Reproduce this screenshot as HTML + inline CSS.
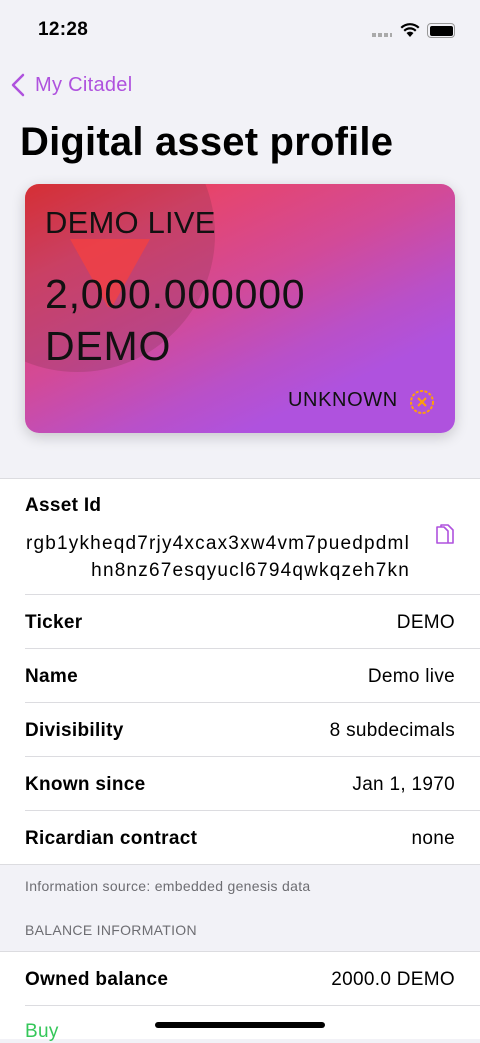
<!DOCTYPE html>
<html><head><meta charset="utf-8"><style>
*{margin:0;padding:0;box-sizing:border-box}
body{width:480px;height:1039px;overflow:hidden;background:#f2f2f7;font-family:"Liberation Sans",sans-serif;color:#000;position:relative;letter-spacing:0.3px}
.a{position:absolute}
.row{position:absolute;left:0;width:480px;height:54px;font-size:19px}
.row .l{position:absolute;left:25px;top:17px;font-weight:bold;font-size:19px}
.row .r{position:absolute;right:25px;top:17px}
.sep{position:absolute;left:25px;right:0;height:1px;background:#dcdce0}
</style></head><body>
<div class="a" style="left:38px;top:19px;font-size:19px;font-weight:bold">12:28</div>
<div class="a" style="left:372px;top:33px;width:20px;height:4px;background:repeating-linear-gradient(90deg,#aaa 0 4px,transparent 4px 6px)"></div>
<svg class="a" style="left:400px;top:22px" width="20" height="16" viewBox="0 0 20 16"><path d="M10 15 L6.5 11 A5 5 0 0 1 13.5 11Z M3.5 8 A9 9 0 0 1 16.5 8 L15 9.6 A7 7 0 0 0 5 9.6Z M0.5 5 A13.5 13.5 0 0 1 19.5 5 L18 6.5 A11.5 11.5 0 0 0 2 6.5Z" fill="#000"/></svg>
<div class="a" style="left:427px;top:23px;width:28px;height:15px;border:1.5px solid #999;border-radius:4px;padding:1.5px"><div style="width:100%;height:100%;background:#000;border-radius:2px"></div></div>
<svg class="a" style="left:10px;top:73px" width="16" height="24"><path d="M13 2 L3 12 L13 22" stroke="#af52de" stroke-width="2.5" fill="none" stroke-linecap="round" stroke-linejoin="round"/></svg>
<div class="a" style="left:35px;top:74px;font-size:20px;color:#af52de">My Citadel</div>
<div class="a" style="left:20px;top:120px;font-size:40px;font-weight:bold;letter-spacing:0.2px">Digital asset profile</div>
<div class="a" style="left:25px;top:184px;width:430px;height:249px;border-radius:14px;overflow:hidden;background:linear-gradient(155deg,#f52e2e 0%,#e5456f 22%,#d24a98 45%,#b950c8 65%,#af52de 78%);box-shadow:0 4px 14px rgba(0,0,0,.18)">
<div class="a" style="left:-85px;top:-87px;width:275px;height:275px;border-radius:50%;background:rgba(120,50,70,.25)"></div>
<svg class="a" style="left:41px;top:51px" width="88" height="76"><path d="M4 4 L84 4 L46 72 L42 72Z" fill="#f54040" opacity=".75"/></svg>
<div class="a" style="left:20px;top:21px;font-size:31px;color:#111;letter-spacing:0.2px">DEMO LIVE</div>
<div class="a" style="left:20px;top:84px;font-size:41px;line-height:52px;color:#111;letter-spacing:0.8px">2,000.000000<br>DEMO</div>
<div class="a" style="left:263px;top:205px;font-size:20px;color:#111;letter-spacing:0.6px">UNKNOWN</div>
<svg class="a" style="left:383px;top:204px" width="28" height="28" viewBox="0 0 28 28"><circle cx="14" cy="14" r="11" fill="none" stroke="#ff9f0a" stroke-width="2" stroke-dasharray="3 1.5"/><path d="M10 10 L18 18 M18 10 L10 18" stroke="#ff9f0a" stroke-width="2"/></svg>
</div>
<div class="a" style="left:0;top:478px;width:480px;height:387px;background:#fff;border-top:1px solid #dcdce0;border-bottom:1px solid #dcdce0"></div>
<div class="a" style="left:25px;top:495px;font-size:19px;font-weight:bold">Asset Id</div>
<div class="a" style="left:20px;top:530px;width:390px;font-size:19px;line-height:27px;text-align:right;letter-spacing:1.2px">rgb1ykheqd7rjy4xcax3xw4vm7puedpdml<br>hn8nz67esqyucl6794qwkqzeh7kn</div>
<svg class="a" style="left:431px;top:523px" width="24" height="28" viewBox="0 0 24 28"><path d="M6 4 h7 l4 4 v12 h-11z M10 4 v-2 h7 l5 5 v13 h-5" fill="none" stroke="#af52de" stroke-width="1.6" stroke-linejoin="round"/></svg>
<div class="sep" style="top:594px"></div>
<div class="row" style="top:595px"><span class="l">Ticker</span><span class="r">DEMO</span></div>
<div class="sep" style="top:648px"></div>
<div class="row" style="top:649px"><span class="l">Name</span><span class="r">Demo live</span></div>
<div class="sep" style="top:702px"></div>
<div class="row" style="top:703px"><span class="l">Divisibility</span><span class="r">8 subdecimals</span></div>
<div class="sep" style="top:756px"></div>
<div class="row" style="top:757px"><span class="l">Known since</span><span class="r">Jan 1, 1970</span></div>
<div class="sep" style="top:810px"></div>
<div class="row" style="top:811px"><span class="l">Ricardian contract</span><span class="r">none</span></div>
<div class="a" style="left:25px;top:878px;font-size:14px;color:#6d6d72">Information source: embedded genesis data</div>
<div class="a" style="left:25px;top:922px;font-size:14px;color:#6d6d72">BALANCE INFORMATION</div>
<div class="a" style="left:0;top:951px;width:480px;height:88px;background:#fff;border-top:1px solid #dcdce0"></div>
<div class="row" style="top:952px"><span class="l">Owned balance</span><span class="r">2000.0 DEMO</span></div>
<div class="sep" style="top:1005px"></div>
<div class="a" style="left:25px;top:1021px;font-size:19px;color:#34c759">Buy</div>
<div class="a" style="left:155px;top:1022px;width:170px;height:6px;border-radius:3px;background:#000"></div>
</body></html>
